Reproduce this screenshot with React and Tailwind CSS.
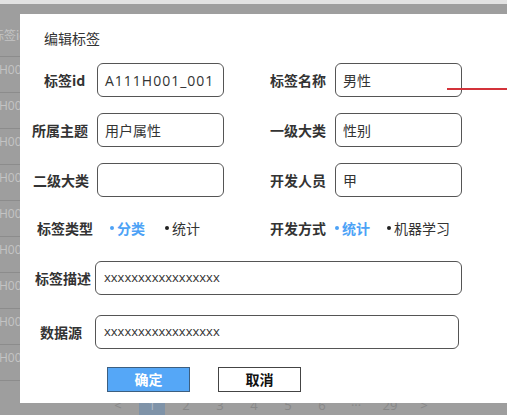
import React from "react";

const rows = ["H001_001", "H001_002", "H001_003", "H001_004", "H001_005", "H001_006", "H001_007", "H001_008", "H001_009"];

function Input({ value, w, mono }) {
  return (
    <div
      className={`shrink-0 h-[34px] rounded-[6px] border border-[#555] flex items-center pl-[7px] text-[#333] ${w}`}
    >
      {value && (
        <span className={mono ? "font-['Open_Sans',sans-serif] text-[14px] tracking-[1px] whitespace-nowrap" : "text-[14px]"}>{value}</span>
      )}
    </div>
  );
}

function XInput({ w }) {
  return (
    <div className={`shrink-0 h-[34px] rounded-[6px] border border-[#555] flex items-center pl-[8px] text-[#333] ${w}`}>
      <span className="font-['Open_Sans',sans-serif] text-[13px]">xxxxxxxxxxxxxxxxx</span>
    </div>
  );
}

function Dot({ blue }) {
  return <span className={`w-[4px] h-[4px] rounded-full mr-[3px] shrink-0 ${blue ? "bg-[#4da2f6]" : "bg-[#222]"}`} />;
}

export default function App() {
  return (
    <div className="relative w-[507px] h-[415px] bg-[#9e9e9e] overflow-hidden font-['Noto_Sans_CJK_SC',sans-serif]">
      {/* background page */}
      <div className="h-[4px] bg-[#e2e2e2]" />
      <div className="w-[20px] overflow-hidden flex flex-col text-[#c4c4c4] text-[12px] pt-[10px]">
        <div className="h-[43px] flex items-center whitespace-nowrap border-b border-[#8c8c8c]">
          <span className="-ml-[8px]">标签id</span>
        </div>
        {rows.map((r) => (
          <div key={r} className="h-[36px] flex items-start pt-[4px] whitespace-nowrap border-b border-[#8c8c8c] font-['Open_Sans',sans-serif]">
            <span className="-ml-[1px]">{r}</span>
          </div>
        ))}
      </div>
      <div className="absolute left-0 right-0 top-[392px] flex items-center text-[13px] text-[#888] font-['Open_Sans',sans-serif] pl-[105px] gap-[8px]">
        {["<", "1", "2", "3", "4", "5", "6", "···", "29", ">"].map((p, i) => (
          <div
            key={i}
            className={`w-[26px] h-[28px] flex items-center justify-center ${i === 1 ? "bg-[#7f93a8] text-[#aeb9c6]" : ""}`}
          >
            {p}
          </div>
        ))}
      </div>

      {/* dialog */}
      <div className="absolute left-[20px] top-[14px] right-0 h-[389px] bg-white flex flex-col text-[#333]">
        <div className="pl-[24px] pt-[14px] h-[34px] text-[14px] leading-[20px]">编辑标签</div>

        <div className="mt-[15px] flex items-center">
          <div className="shrink-0 w-[77px] pl-[24px] text-[14px] font-bold">标签id</div>
          <Input value="A111H001_001" w="w-[127px]" mono />
          <div className="shrink-0 w-[111px] pl-[46px] text-[14px] font-bold">标签名称</div>
          <Input value="男性" w="w-[127px]" />
        </div>

        <div className="mt-[16px] flex items-center">
          <div className="shrink-0 w-[77px] pl-[12px] text-[14px] font-bold">所属主题</div>
          <Input value="用户属性" w="w-[127px]" />
          <div className="shrink-0 w-[111px] pl-[46px] text-[14px] font-bold">一级大类</div>
          <Input value="性别" w="w-[127px]" />
        </div>

        <div className="mt-[16px] flex items-center">
          <div className="shrink-0 w-[77px] pl-[13px] text-[14px] font-bold">二级大类</div>
          <Input value="" w="w-[127px]" />
          <div className="shrink-0 w-[111px] pl-[46px] text-[14px] font-bold">开发人员</div>
          <Input value="甲" w="w-[127px]" />
        </div>

        <div className="mt-[21px] h-[20px] flex items-center text-[14px]">
          <div className="shrink-0 w-[90px] pl-[17px] font-bold">标签类型</div>
          <div className="shrink-0 w-[55px] text-[#4da2f6] font-bold flex items-center">
            <Dot blue />
            <span>分类</span>
          </div>
          <div className="shrink-0 w-[105px] flex items-center">
            <Dot />
            <span>统计</span>
          </div>
          <div className="shrink-0 w-[65px] font-bold">开发方式</div>
          <div className="shrink-0 w-[52px] text-[#4da2f6] font-bold flex items-center">
            <Dot blue />
            <span>统计</span>
          </div>
          <div className="flex items-center">
            <Dot />
            <span>机器学习</span>
          </div>
        </div>

        <div className="mt-[23px] flex items-center">
          <div className="shrink-0 w-[75px] pl-[15px] text-[14px] font-bold">标签描述</div>
          <XInput w="w-[367px]" />
        </div>

        <div className="mt-[20px] flex items-center">
          <div className="shrink-0 w-[75px] pl-[20px] text-[14px] font-bold">数据源</div>
          <XInput w="w-[364px]" />
        </div>

        <div className="mt-[18px] flex items-center pl-[87px] gap-[28px]">
          <div className="w-[83px] h-[25px] bg-[#55a7f7] border border-[#3d5f80] text-white font-bold text-[14px] flex items-center justify-center">
            确定
          </div>
          <div className="w-[83px] h-[25px] bg-white border border-[#444] text-[#111] font-bold text-[14px] flex items-center justify-center">
            取消
          </div>
        </div>
      </div>

      {/* red annotation line */}
      <div className="absolute left-[447px] top-[88px] w-[60px] h-[2px] bg-[#d3333a]" />
    </div>
  );
}
